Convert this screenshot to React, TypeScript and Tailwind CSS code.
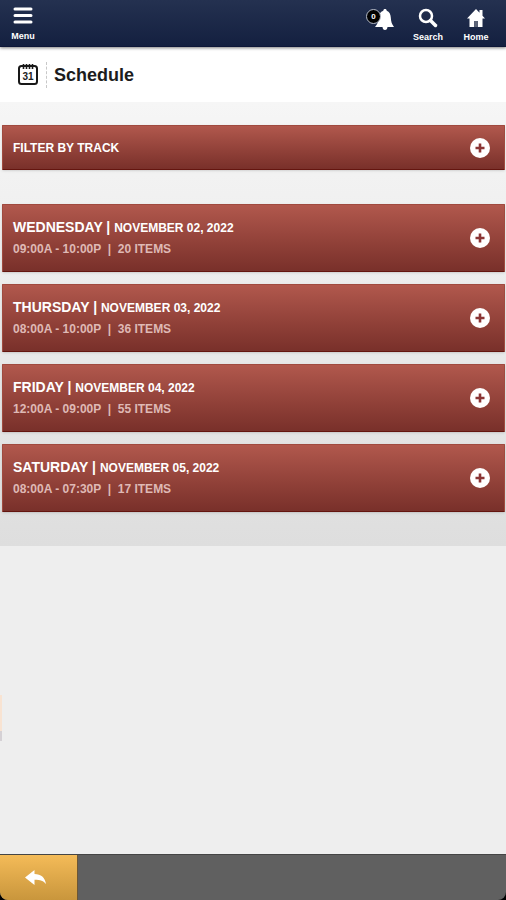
import React from 'react';

const DAYS = [
  { day: 'WEDNESDAY', date: 'NOVEMBER 02, 2022', hours: '09:00A - 10:00P', items: 20 },
  { day: 'THURSDAY', date: 'NOVEMBER 03, 2022', hours: '08:00A - 10:00P', items: 36 },
  { day: 'FRIDAY', date: 'NOVEMBER 04, 2022', hours: '12:00A - 09:00P', items: 55 },
  { day: 'SATURDAY', date: 'NOVEMBER 05, 2022', hours: '08:00A - 07:30P', items: 17 },
];

const PANEL =
  'flex w-full items-center justify-between rounded-[1px] border border-[#a04a3f] border-b-[#64150f] bg-linear-to-b from-[#b1584d] to-[#79302a] pl-[10px] pr-[14px] text-left font-bold text-white shadow-sm';

function PlusCircle() {
  return (
    <svg className="h-5 w-5 shrink-0" viewBox="0 0 20 20" aria-hidden="true">
      <circle cx="10" cy="10" r="10" fill="#fff" />
      <path d="M10 5.500v9M5.500 10h9" stroke="#8b3535" strokeWidth="2.600" />
    </svg>
  );
}

function BellIcon() {
  return (
    <svg className="h-6 w-7" viewBox="0 0 28 24" aria-hidden="true">
      <path
        d="M18 1c-1 0-1.700.7-1.700 1.700-3 .9-4.300 3.400-4.500 6.900-.2 4-1.200 6.500-3.800 9.400h7.500c.2 1.900 1 3 2.500 3s2.300-1.100 2.500-3H27c-2.200-2.700-3-5.400-3.200-9.400-.2-3.500-1.300-6-4.100-6.900 0-1-.7-1.700-1.700-1.700z"
        fill="#fff"
      />
    </svg>
  );
}

function CalendarIcon() {
  return (
    <svg className="h-6 w-5" viewBox="0 0 20 24" aria-hidden="true">
      <rect x="1" y="3" width="18" height="18" rx="2.500" fill="none" stroke="#181818" strokeWidth="2" />
      <path d="M5.500 1v5M8.500 1v5M11.500 1v5M14.500 1v5" stroke="#181818" strokeWidth="1.600" />
      <text x="10" y="17" textAnchor="middle" fontSize="10" fontWeight="700" fill="#222">
        31
      </text>
    </svg>
  );
}

export default function App() {
  return (
    <div className="flex min-h-screen flex-col bg-[#eee] font-['Liberation_Sans',Arial,sans-serif]">
      <header className="z-10 flex h-[47px] items-start justify-between border-b border-[#0e1738] bg-linear-to-b from-[#243150] to-[#142040] text-white shadow-[0_1px_3px_rgba(0,0,0,0.5)]">
        <button type="button" className="flex w-[46px] flex-col items-center pt-[6px]">
          <svg className="h-[18px] w-5" viewBox="0 0 20 18" aria-hidden="true">
            <path d="M2 3h16M2 9.500h16M2 16h16" stroke="#fff" strokeWidth="3" strokeLinecap="round" />
          </svg>
          <span className="mt-[6px] text-[9px] leading-3 font-bold">Menu</span>
        </button>
        <div className="flex items-start">
          <button type="button" aria-label="Notifications" className="relative mr-[9px] pt-2">
            <BellIcon />
            <span className="absolute top-[9px] -left-[1px] flex h-[15px] w-[15px] items-center justify-center rounded-full border border-[#b7bdca] bg-black text-[8px] leading-none font-bold">
              0
            </span>
          </button>
          <button type="button" className="flex w-12 flex-col items-center pt-2">
            <svg className="h-5 w-5" viewBox="0 0 20 20" fill="none" stroke="#fff" aria-hidden="true">
              <circle cx="8" cy="8" r="6" strokeWidth="2.500" />
              <path d="M12.500 12.500l5 5" strokeWidth="3.500" strokeLinecap="round" />
            </svg>
            <span className="mt-[3px] text-[9px] leading-3 font-bold">Search</span>
          </button>
          <button type="button" className="mr-[6px] flex w-12 flex-col items-center pt-2">
            <svg className="h-5 w-5" viewBox="0 0 20 20" fill="#fff" aria-hidden="true">
              <path d="M10 1L1 10.500h2.500V19h4.700v-6h3.600v6h4.700v-8.500H19l-2.500-2.700V2h-3v2.700z" />
              <path d="M8.200 13h3.600v6H8.200z" fill="#5d6578" />
            </svg>
            <span className="mt-[3px] text-[9px] leading-3 font-bold">Home</span>
          </button>
        </div>
      </header>

      <div className="flex h-[55px] items-center bg-white pl-[18px]">
        <CalendarIcon />
        <div className="ml-2 flex h-[26px] items-center border-l border-dashed border-[#c8c8c8] pl-[7px]">
          <h1 className="text-lg leading-5 font-bold text-[#1c1c1c]">Schedule</h1>
        </div>
      </div>

      <main className="bg-linear-to-b from-[#f6f6f6] to-[#dedede] pt-[23px] pr-px pb-[34px] pl-[2px]">
        <button type="button" className={`${PANEL} mb-[34px] h-[45px]`}>
          <span className="text-xs leading-4">FILTER BY TRACK</span>
          <PlusCircle />
        </button>
        <div className="flex flex-col gap-3">
          {DAYS.map((item) => (
            <button key={item.day} type="button" className={`${PANEL} h-[68px]`}>
              <span className="flex flex-col gap-[5px] pb-[2px]">
                <span className="text-sm leading-[18px]">
                  {item.day} | <span className="text-xs">{item.date}</span>
                </span>
                <span className="text-xs leading-4 whitespace-pre text-[#dfb9b5]">
                  {item.hours}{'  |  '}{item.items} ITEMS
                </span>
              </span>
              <PlusCircle />
            </button>
          ))}
        </div>
      </main>

      <div className="flex flex-1 items-end pb-[113px]">
        <div className="h-[46px] w-[2px] border-b-10 border-[#d5d1d5] bg-[#f8e3d2]" />
      </div>

      <footer className="bg-black">
        <div className="flex h-[46px] overflow-hidden rounded-b-lg border-t border-[#454545] bg-[#606060]">
          <button
            type="button"
            aria-label="Back"
            className="flex w-[78px] items-center justify-center border-r border-[#6b5635] bg-linear-to-b from-[#f4bb58] to-[#c9963c] pr-[6px]"
          >
            <svg className="h-4 w-[22px]" viewBox="0 0 22 16" fill="#fff" aria-hidden="true">
              <path d="M0 7.500L9.500 0v4c6.500 0 10.500 3.500 11.500 10-2.500-3-5.500-4.200-11.500-4.200V15z" />
            </svg>
          </button>
        </div>
      </footer>
    </div>
  );
}
